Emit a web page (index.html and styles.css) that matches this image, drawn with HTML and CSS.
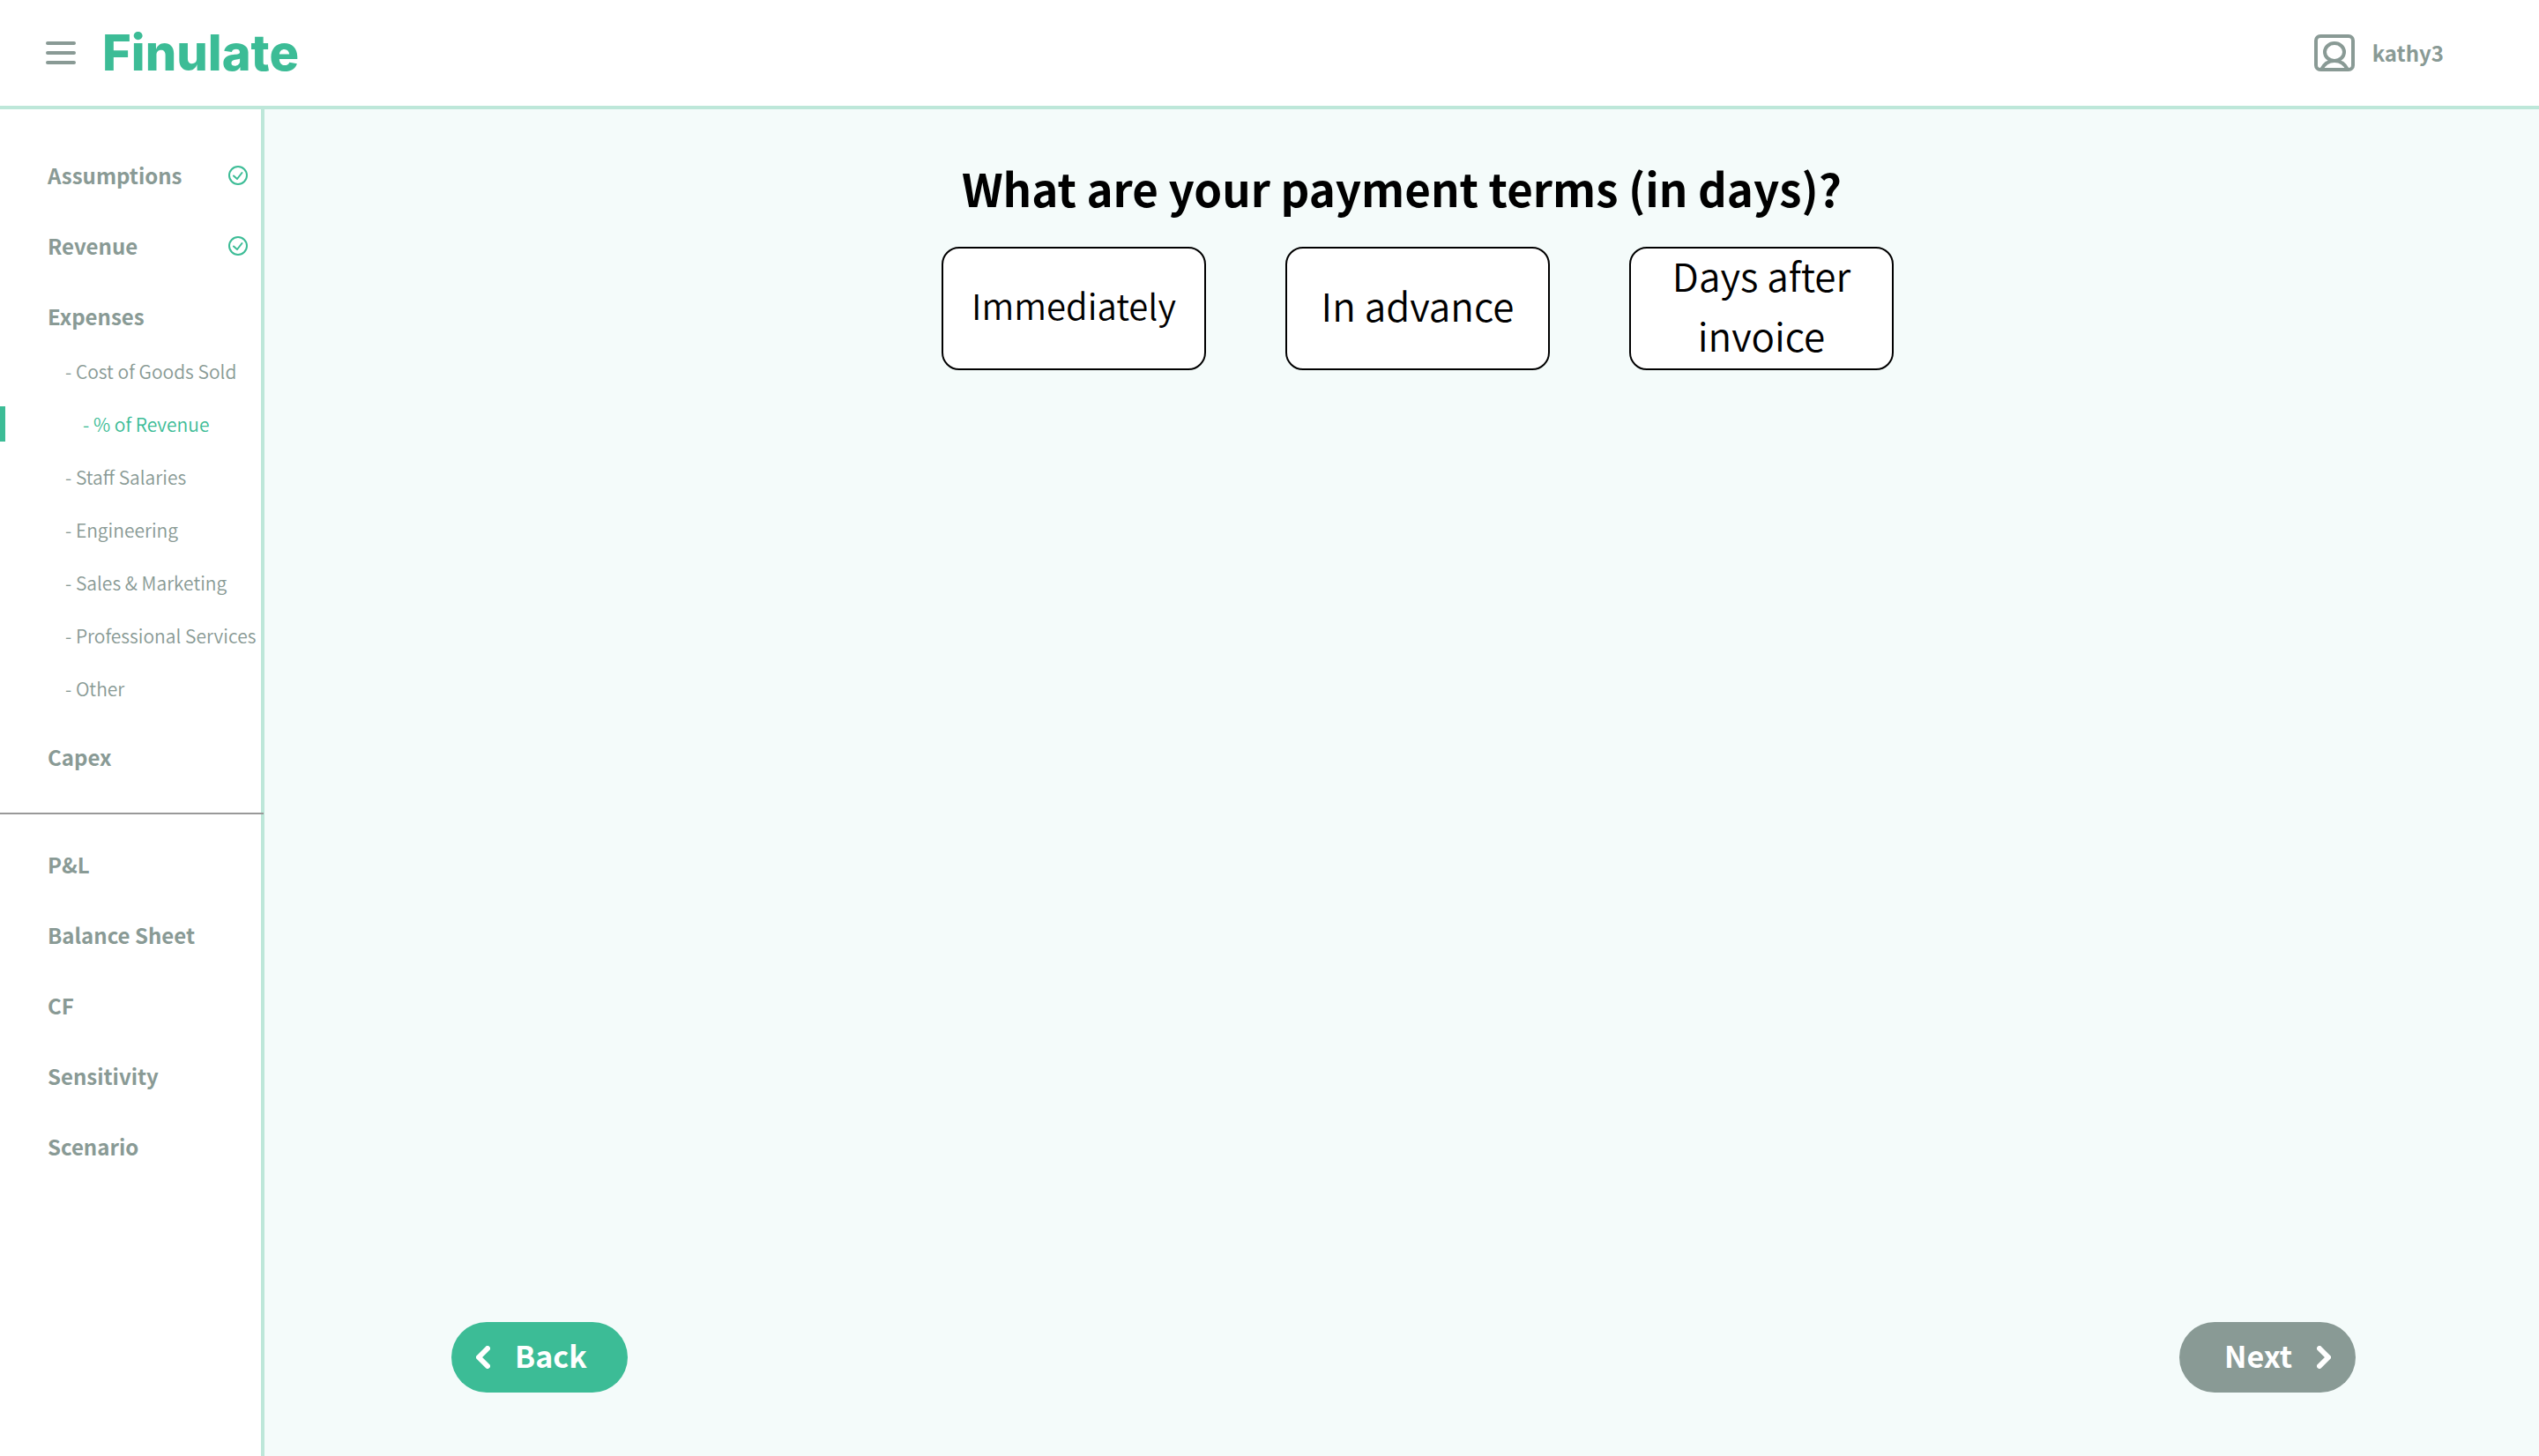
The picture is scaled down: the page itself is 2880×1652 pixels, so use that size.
FILE: index.html
```html
<!DOCTYPE html>
<html lang="en">
<head>
<meta charset="utf-8">
<title>Finulate</title>
<link rel="stylesheet" href="styles.css">
</head>
<body>
<header class="topbar">
  <button class="menu-button" type="button" aria-label="Menu">
    <svg width="34" height="26" viewBox="0 0 34 26" stroke="currentColor" stroke-width="4" stroke-linecap="round"><path d="M2 2H32M2 13H32M2 24H32"/></svg>
  </button>
  <a class="logo" href="#">Finulate</a>
  <a class="user" href="#">
    <svg width="46" height="42" viewBox="0 0 46 42" fill="none" stroke="currentColor" stroke-width="4"><rect x="2" y="2" width="42" height="38" rx="5"/><ellipse cx="23" cy="20" rx="11" ry="10"/><path d="M8 40C11 34 16 30 23 30S35 34 38 40"/></svg>
    <span>kathy3</span>
  </a>
</header>
<div class="layout">
  <nav class="sidebar">
    <ul class="nav-list">
      <li><a class="nav-link" href="#">Assumptions<svg class="check" width="22" height="22" viewBox="0 0 22 22" fill="none" stroke="currentColor" stroke-width="2" stroke-linecap="round" stroke-linejoin="round"><circle cx="11" cy="11" r="10"/><path d="M6 11.500L10 15L15.500 8"/></svg></a></li>
      <li><a class="nav-link" href="#">Revenue<svg class="check" width="22" height="22" viewBox="0 0 22 22" fill="none" stroke="currentColor" stroke-width="2" stroke-linecap="round" stroke-linejoin="round"><circle cx="11" cy="11" r="10"/><path d="M6 11.500L10 15L15.500 8"/></svg></a></li>
      <li><a class="nav-link" href="#">Expenses</a>
        <ul class="sub-list">
          <li><a class="sub-link" href="#">- Cost of Goods Sold</a></li>
          <li><a class="sub-link nested active" href="#">- % of Revenue</a></li>
          <li><a class="sub-link" href="#">- Staff Salaries</a></li>
          <li><a class="sub-link" href="#">- Engineering</a></li>
          <li><a class="sub-link" href="#">- Sales &amp; Marketing</a></li>
          <li><a class="sub-link" href="#">- Professional Services</a></li>
          <li><a class="sub-link" href="#">- Other</a></li>
        </ul>
      </li>
      <li><a class="nav-link" href="#">Capex</a></li>
    </ul>
    <ul class="nav-list reports">
      <li><a class="nav-link" href="#">P&amp;L</a></li>
      <li><a class="nav-link" href="#">Balance Sheet</a></li>
      <li><a class="nav-link" href="#">CF</a></li>
      <li><a class="nav-link" href="#">Sensitivity</a></li>
      <li><a class="nav-link" href="#">Scenario</a></li>
    </ul>
  </nav>
  <main class="content">
    <h1 class="question">What are your payment terms (in days)?</h1>
    <div class="options">
      <button class="option compact" type="button">Immediately</button>
      <button class="option" type="button">In advance</button>
      <button class="option" type="button">Days after invoice</button>
    </div>
    <div class="steps">
      <button class="step back" type="button">
        <svg width="16" height="26" viewBox="0 0 16 26" fill="none" stroke="currentColor" stroke-width="6" stroke-linecap="round" stroke-linejoin="round"><path d="M13 3L3 13L13 23"/></svg>
        <span>Back</span>
      </button>
      <button class="step next" type="button">
        <span>Next</span>
        <svg width="16" height="26" viewBox="0 0 16 26" fill="none" stroke="currentColor" stroke-width="6" stroke-linecap="round" stroke-linejoin="round"><path d="M3 3L13 13L3 23"/></svg>
      </button>
    </div>
  </main>
</div>
</body>
</html>
```
FILE: styles.css
```css
:root {
  --green: #3cbc96;
  --grey: #899a95;
  --line: #bde7d9;
}

* {
  box-sizing: border-box;
}

body {
  margin: 0;
  min-height: 100vh;
  display: flex;
  flex-direction: column;
  background: #f4fbfa;
  color: #000;
  font-family: "Noto Sans CJK JP", "Noto Sans", sans-serif;
}

a {
  color: inherit;
  text-decoration: none;
}

button {
  border: 0;
  padding: 0;
  font: inherit;
  color: inherit;
  cursor: pointer;
}

svg {
  display: block;
  flex: none;
}

ul {
  margin: 0;
  padding: 0;
  list-style: none;
}

/* Header */
.topbar {
  display: flex;
  align-items: center;
  height: 124px;
  padding: 0 108px 0 52px;
  background: #fff;
  border-bottom: 4px solid var(--line);
  color: var(--grey);
}

.menu-button {
  background: none;
}

.logo {
  margin-left: 30px;
  color: var(--green);
  font-family: Inter, sans-serif;
  font-size: 56px;
  font-weight: 800;
  line-height: 120px;
}

.user {
  display: flex;
  align-items: center;
  gap: 20px;
  margin-left: auto;
  font-size: 24px;
  font-weight: 700;
  line-height: 40px;
}

/* Page body */
.layout {
  flex: 1;
  display: flex;
}

.sidebar {
  flex: none;
  width: 300px;
  padding-top: 55px;
  background: #fff;
  border-right: 4px solid var(--line);
  color: var(--grey);
}

.nav-list {
  display: flex;
  flex-direction: column;
  gap: 40px;
}

.nav-link {
  display: flex;
  align-items: center;
  justify-content: space-between;
  padding: 0 15px 0 54px;
  font-size: 24px;
  font-weight: 700;
  line-height: 40px;
}

.check {
  color: var(--green);
}

.reports {
  margin-top: 43px;
  margin-right: -3px;
  padding-top: 37px;
  border-top: 2px solid #999;
}

.sub-list {
  padding-top: 22px;
  margin-bottom: -22px;
}

.sub-link {
  display: block;
  margin-bottom: 20px;
  padding-left: 68px;
  border-left: 6px solid transparent;
  font-size: 21px;
  font-weight: 350;
  line-height: 40px;
  white-space: nowrap;
}

.nested {
  padding-left: 88px;
}

.active {
  border-left-color: var(--green);
  color: var(--green);
}

.content {
  flex: 1;
  display: flex;
  flex-direction: column;
  padding: 56px 208px 72px 208px;
}

.question {
  margin: 0;
  font-size: 51px;
  font-weight: 700;
  line-height: 66px;
  text-align: center;
}

.options {
  display: flex;
  justify-content: center;
  gap: 90px;
  margin-top: 34px;
  padding-left: 36px;
}

.option {
  display: flex;
  align-items: center;
  justify-content: center;
  width: 300px;
  height: 140px;
  padding: 0 32px 8px;
  background: #fff;
  border: 2px solid #000;
  border-radius: 20px;
  font-size: 44px;
  font-weight: 350;
  line-height: 68px;
  text-align: center;
}

.compact {
  font-size: 40px;
}

.steps {
  display: flex;
  justify-content: space-between;
  margin-top: auto;
  padding-left: 4px;
}

.step {
  display: flex;
  align-items: center;
  gap: 28px;
  width: 200px;
  height: 80px;
  padding: 0 28px;
  border-radius: 40px;
  color: #fff;
  font-size: 34px;
  font-weight: 700;
  line-height: 76px;
}

.step span {
  padding-bottom: 4px;
}

.back {
  background: var(--green);
}

.next {
  justify-content: flex-end;
  background: var(--grey);
}
```
